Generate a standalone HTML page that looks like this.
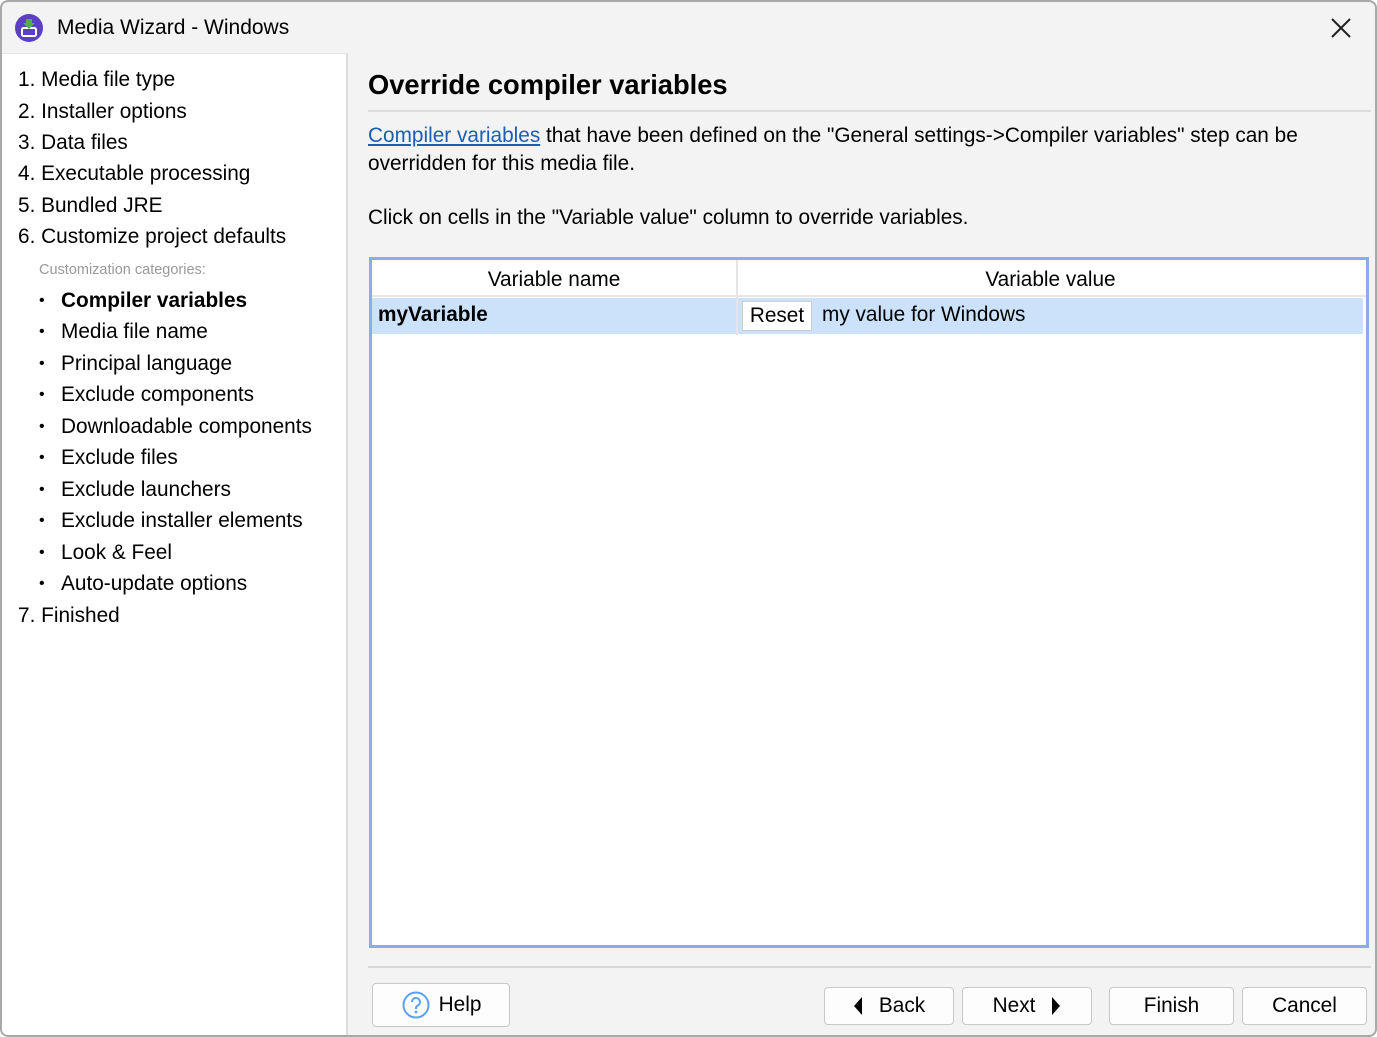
<!DOCTYPE html>
<html><head><meta charset="utf-8"><style>
*{margin:0;padding:0;box-sizing:border-box}
body{width:1377px;height:1037px;background:#fff;font-family:"Liberation Sans",sans-serif;color:#000;overflow:hidden;position:relative}
.win{position:absolute;left:0;top:0;width:1377px;height:1037px;border:2px solid #a9a9a9;border-radius:8px;background:#f3f3f3;overflow:hidden}
.t{position:absolute;white-space:nowrap;font-size:20.8px;line-height:24px}
.left{position:absolute;left:0;top:51px;width:346px;height:984px;background:#fff;border-right:2px solid #dcdcdc;border-top:1px solid #e6e6e6}
.b{position:absolute;left:37px;font-size:16px;line-height:24px}
.btn{position:absolute;height:38px;background:#fdfdfd;border:1px solid #c8c8c8;border-radius:4px;font-size:20.8px;display:flex;align-items:center;justify-content:center}
</style></head><body><div class="win">
<svg style="position:absolute;left:12px;top:11px" width="30" height="30" viewBox="0 0 30 30"><circle cx="15" cy="15" r="14" fill="#5b3fc4"/><rect x="8" y="15" width="14" height="8" rx="1.5" fill="none" stroke="#fff" stroke-width="2"/><path d="M12 6h6v4h3l-6 6-6-6h3z" fill="#4caf50"/></svg>
<div class="t" style="left:55px;top:14px;font-size:21px">Media Wizard - Windows</div>
<svg style="position:absolute;left:1328px;top:15px" width="22" height="22" viewBox="0 0 22 22"><path d="M2 2L20 20M20 2L2 20" stroke="#222" stroke-width="2"/></svg>
<div class="left">
<div class="t" style="left:16px;top:14px">1. Media file type</div>
<div class="t" style="left:16px;top:46px">2. Installer options</div>
<div class="t" style="left:16px;top:77px">3. Data files</div>
<div class="t" style="left:16px;top:108px">4. Executable processing</div>
<div class="t" style="left:16px;top:140px">5. Bundled JRE</div>
<div class="t" style="left:16px;top:171px">6. Customize project defaults</div>
<div class="t" style="left:37px;top:204px;font-size:14.5px;color:#999">Customization categories:</div>
<div class="b" style="top:235px">•</div><div class="t" style="left:59px;top:235px;font-weight:bold">Compiler variables</div>
<div class="b" style="top:266px">•</div><div class="t" style="left:59px;top:266px">Media file name</div>
<div class="b" style="top:298px">•</div><div class="t" style="left:59px;top:298px">Principal language</div>
<div class="b" style="top:329px">•</div><div class="t" style="left:59px;top:329px">Exclude components</div>
<div class="b" style="top:361px">•</div><div class="t" style="left:59px;top:361px">Downloadable components</div>
<div class="b" style="top:392px">•</div><div class="t" style="left:59px;top:392px">Exclude files</div>
<div class="b" style="top:424px">•</div><div class="t" style="left:59px;top:424px">Exclude launchers</div>
<div class="b" style="top:455px">•</div><div class="t" style="left:59px;top:455px">Exclude installer elements</div>
<div class="b" style="top:487px">•</div><div class="t" style="left:59px;top:487px">Look &amp; Feel</div>
<div class="b" style="top:518px">•</div><div class="t" style="left:59px;top:518px">Auto-update options</div>
<div class="t" style="left:16px;top:550px">7. Finished</div>
</div>
<div class="t" style="left:366px;top:68px;font-size:27.3px;line-height:30px;font-weight:bold">Override compiler variables</div>
<div style="position:absolute;left:366px;top:108px;width:1003px;height:2px;background:#dcdcdc"></div>
<div class="t" style="left:366px;top:122px"><span style="color:#1a5fb4;text-decoration:underline">Compiler variables</span> that have been defined on the "General settings-&gt;Compiler variables" step can be</div>
<div class="t" style="left:366px;top:150px">overridden for this media file.</div>
<div class="t" style="left:366px;top:204px">Click on cells in the "Variable value" column to override variables.</div>
<div style="position:absolute;left:367px;top:255px;width:1000px;height:691px;border:3px solid #8aacec;background:#fff">
<div style="position:absolute;left:0;top:0;width:994px;height:37px;border-bottom:2px solid #e6e6e6"></div>
<div style="position:absolute;left:364px;top:0;width:2px;height:75px;background:#e6e6e6"></div>
<div class="t" style="left:0;width:364px;top:8px;text-align:center">Variable name</div>
<div class="t" style="left:366px;width:625px;top:8px;text-align:center">Variable value</div>
<div style="position:absolute;left:0;top:38px;width:364px;height:36px;background:#cce2fb"></div>
<div style="position:absolute;left:366px;top:38px;width:625px;height:36px;background:#cce2fb"></div>
<div class="t" style="left:6px;top:43px;font-weight:bold">myVariable</div>
<div style="position:absolute;left:370px;top:41px;width:70px;height:30px;background:#fff;border:1px solid #ccc;font-size:20.8px;text-align:center;line-height:28px">Reset</div>
<div class="t" style="left:450px;top:43px">my value for Windows</div>
</div>
<div style="position:absolute;left:366px;top:964px;width:1003px;height:2px;background:#d8d8d8"></div>
<div class="btn" style="left:370px;top:981px;width:138px;height:44px"><svg width="30" height="30" viewBox="0 0 30 30" style="margin-right:8px"><circle cx="15" cy="15" r="12.5" fill="none" stroke="#5aa0f0" stroke-width="2"/><path d="M11 12a4 4 0 1 1 5.5 3.7c-1 .5-1.5 1.2-1.5 2.5v.8" fill="none" stroke="#5aa0f0" stroke-width="2"/><circle cx="15" cy="22" r="1.4" fill="#5aa0f0"/></svg>Help</div>
<div class="btn" style="left:822px;top:985px;width:130px"><svg width="10" height="18" viewBox="0 0 10 18" style="margin-right:16px"><path d="M9 0L1 9l8 9z" fill="#000"/></svg>Back</div>
<div class="btn" style="left:960px;top:985px;width:130px">Next<svg width="10" height="18" viewBox="0 0 10 18" style="margin-left:16px"><path d="M1 0l8 9-8 9z" fill="#000"/></svg></div>
<div class="btn" style="left:1107px;top:985px;width:125px">Finish</div>
<div class="btn" style="left:1240px;top:985px;width:125px">Cancel</div>
</div></body></html>
